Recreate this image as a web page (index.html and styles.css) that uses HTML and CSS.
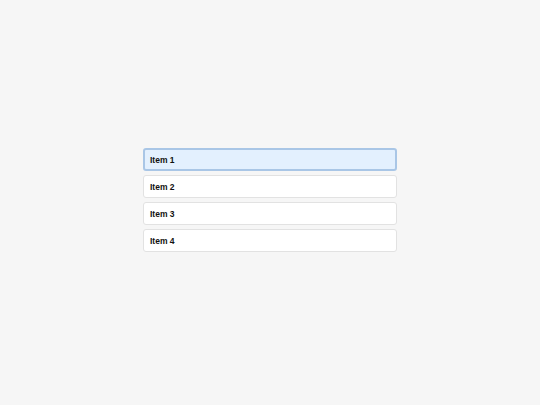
FILE: index.html
```html
<!DOCTYPE html>
<html>
<head>
<meta charset="utf-8">
<link rel="stylesheet" href="styles.css">
</head>
<body>
<div class="page">
  <ul class="list">
    <li class="item selected">Item 1</li>
    <li class="item">Item 2</li>
    <li class="item">Item 3</li>
    <li class="item">Item 4</li>
  </ul>
</div>
</body>
</html>
```
FILE: styles.css
```css
html, body {
  margin: 0;
  padding: 0;
  background: #f6f6f6;
}
.page {
  box-sizing: border-box;
  width: 540px;
  height: 405px;
  padding-bottom: 5px;
  display: flex;
  align-items: center;
  justify-content: center;
  font-family: "Liberation Sans", Arial, sans-serif;
}
.list {
  list-style: none;
  margin: 0;
  padding: 0;
  width: 254px;
  display: flex;
  flex-direction: column;
  gap: 4px;
}
.item {
  box-sizing: border-box;
  height: 23px;
  display: flex;
  align-items: center;
  padding: 0 6px;
  background: #ffffff;
  border: 1px solid #e2e2e2;
  border-radius: 3px;
  font-size: 8.5px;
  font-weight: bold;
  color: #111;
}
.item.selected {
  background: #e3f0fe;
  border: 2px solid #a9c6e6;
  padding: 0 5px;
}
```
